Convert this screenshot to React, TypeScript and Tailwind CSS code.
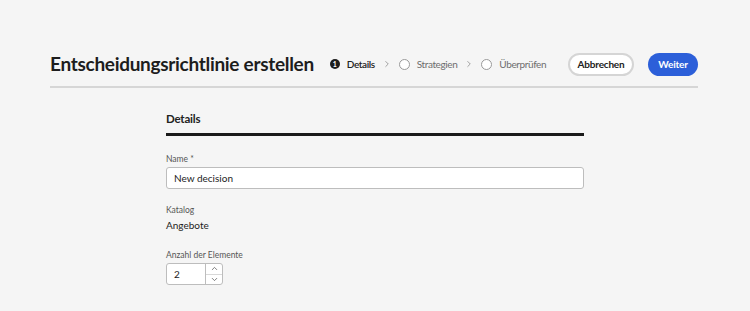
import { ChevronRight, ChevronUp, ChevronDown } from "lucide-react";

function Step({ label, active, num }: { label: string; active?: boolean; num: number }) {
  return (
    <div className="flex items-center gap-[7px]">
      {active ? (
        <span className="w-[10px] h-[10px] rounded-full bg-[#1d1d1d] text-white text-[7px] leading-[10px] font-bold flex items-center justify-center">
          {num}
        </span>
      ) : (
        <span className="w-[11px] h-[11px] rounded-full border border-[#9a9a9a] bg-white"></span>
      )}
      <span
        className={
          active
            ? "text-[10px] tracking-[-0.4px] text-[#222] font-semibold"
            : "text-[10px] tracking-[-0.4px] text-[#6e6e6e]"
        }
      >
        {label}
      </span>
    </div>
  );
}

export default function App() {
  return (
    <div className="w-[750px] h-[311px] bg-[#f5f5f5] font-['Lato','Noto_Sans',sans-serif] text-[#222]">
      <div className="pl-[50px] pr-[52px] pt-[52px]">
        <div className="flex items-center h-[24px]">
          <h1 className="shrink-0 whitespace-nowrap text-[19px] font-bold text-[#1d1d1d] tracking-[-0.3px]">
            Entscheidungsrichtlinie erstellen
          </h1>
          <div className="flex items-center ml-[16px] gap-[7px] shrink-0">
            <Step label="Details" active num={1} />
            <ChevronRight className="w-[10px] h-[10px] text-[#777]" strokeWidth={1.6} />
            <Step label="Strategien" num={2} />
            <ChevronRight className="w-[10px] h-[10px] text-[#777]" strokeWidth={1.6} />
            <Step label="Überprüfen" num={3} />
          </div>
          <div className="flex-1" />
          <div className="flex items-center gap-[14px] shrink-0">
            <button className="w-[66px] h-[23px] rounded-full border-2 border-[#d5d5d5] bg-white text-[10px] tracking-[-0.2px] font-bold text-[#222]">
              Abbrechen
            </button>
            <button className="w-[50px] h-[23px] rounded-full bg-[#2c5fd9] text-[10px] tracking-[-0.2px] font-bold text-white">
              Weiter
            </button>
          </div>
        </div>
        <div className="mt-[10px] h-[2px] bg-[#d6d6d6]" />
      </div>

      <div className="ml-[166px] w-[418px] pt-[23px]">
        <div className="text-[11.5px] font-bold text-[#222] leading-[16px] tracking-[-0.2px]">Details</div>
        <div className="mt-[6px] h-[3px] bg-[#1a1a1a]" />

        <div className="mt-[17px] text-[8.5px] text-[#555] leading-[12px]">Name *</div>
        <div className="mt-[2px] h-[22px] border border-[#bdbdbd] rounded-[3px] bg-white flex items-center px-[7px] text-[10px] text-[#222]">
          New decision
        </div>

        <div className="mt-[15px] text-[8.5px] text-[#555] leading-[12px]">Katalog</div>
        <div className="mt-[2px] text-[10px] text-[#222] leading-[14px]">Angebote</div>

        <div className="mt-[17px] text-[8.5px] text-[#555] leading-[12px]">Anzahl der Elemente</div>
        <div className="mt-[2px] w-[57px] h-[22px] border border-[#bdbdbd] rounded-[3px] bg-white flex">
          <div className="flex-1 flex items-center px-[7px] text-[10px] text-[#222]">2</div>
          <div className="w-[17px] border-l border-[#bdbdbd] flex flex-col">
            <div className="flex-1 flex items-center justify-center">
              <ChevronUp className="w-[9px] h-[9px] text-[#555]" strokeWidth={2} />
            </div>
            <div className="flex-1 flex items-center justify-center border-t border-[#d8d8d8]">
              <ChevronDown className="w-[9px] h-[9px] text-[#555]" strokeWidth={2} />
            </div>
          </div>
        </div>
      </div>
    </div>
  );
}
